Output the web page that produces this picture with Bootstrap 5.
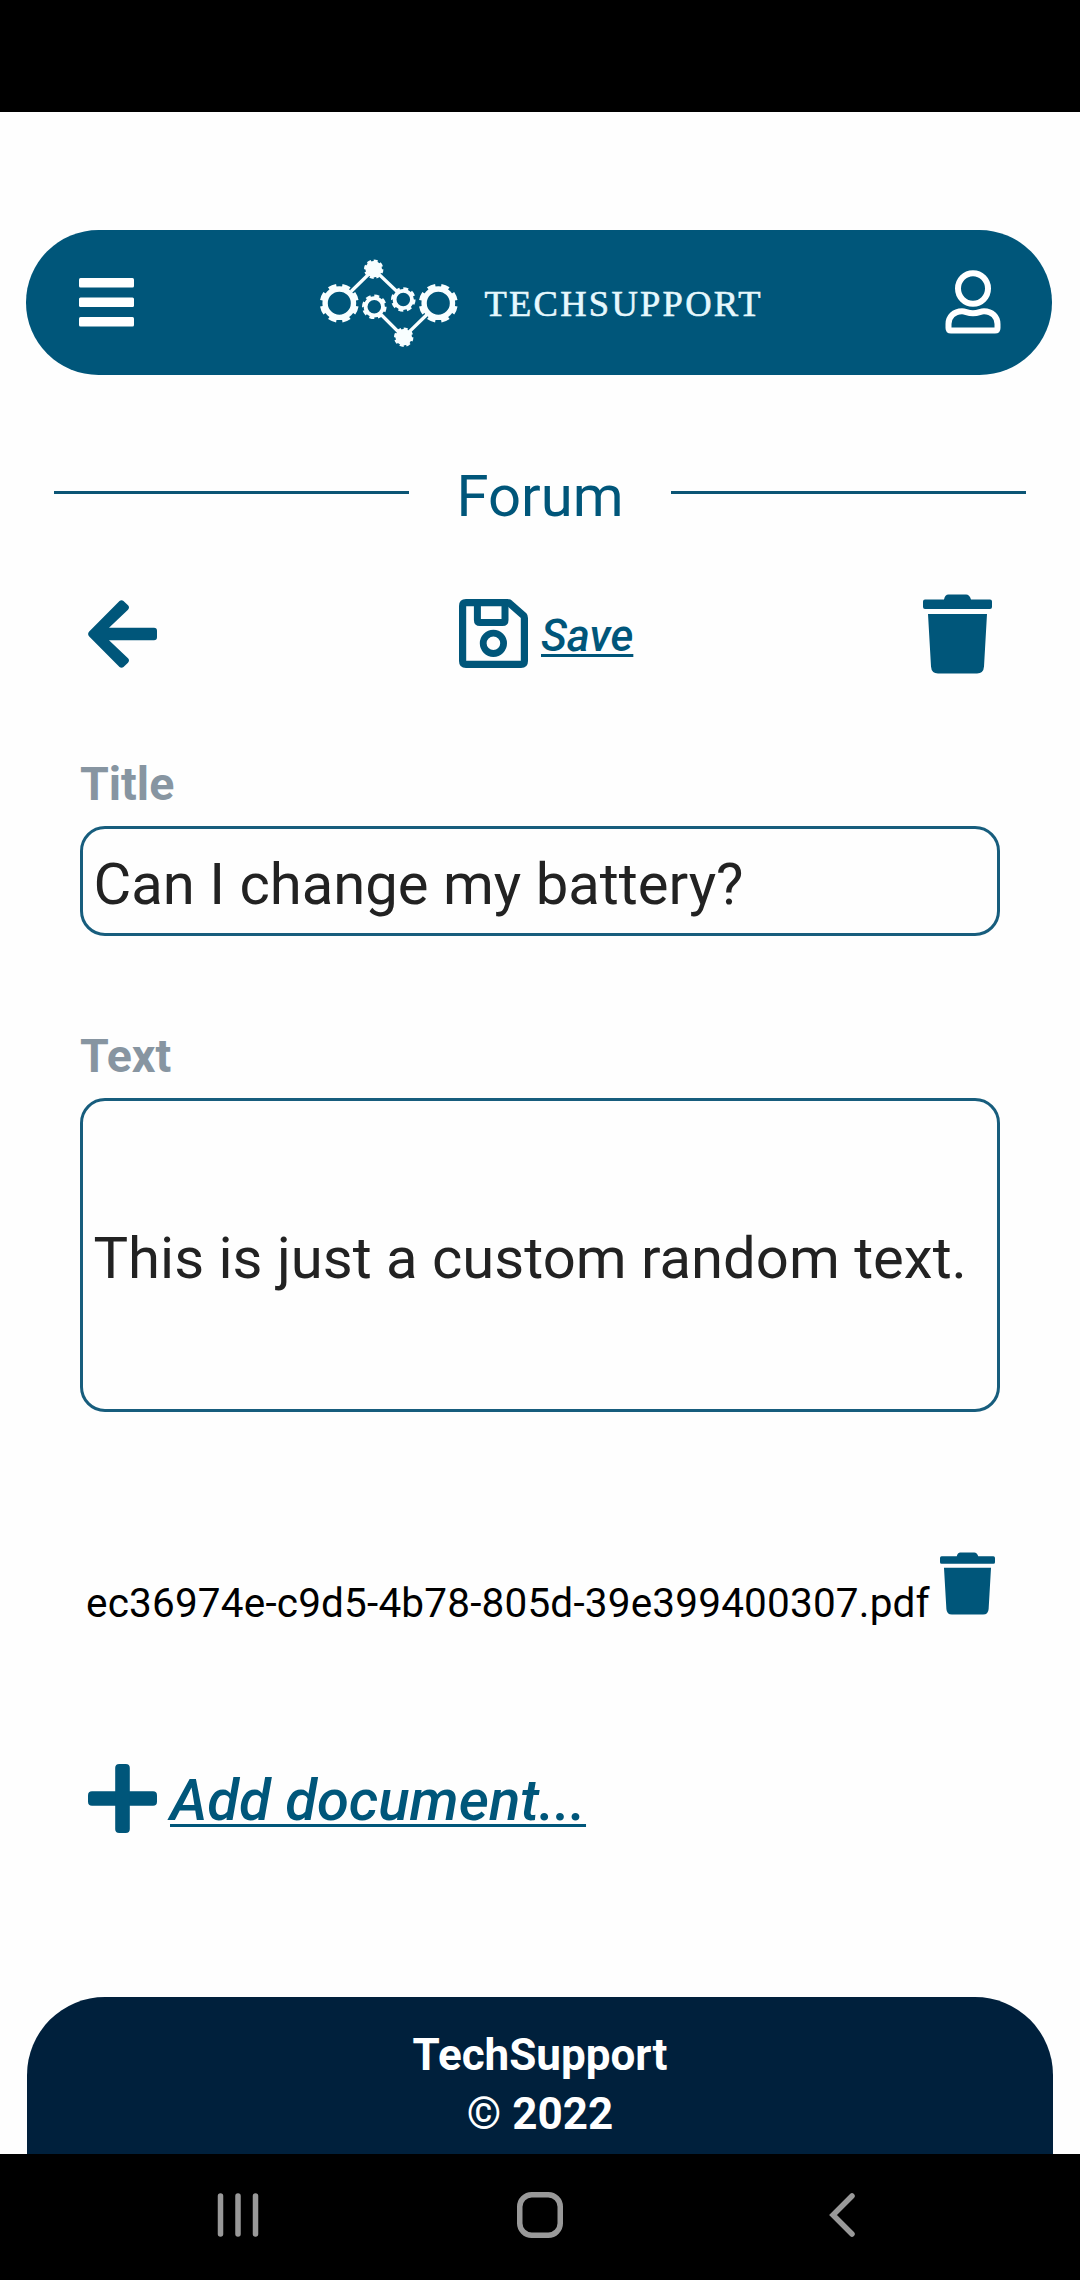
<!DOCTYPE html>
<html lang="en">
<head>
<meta charset="utf-8">
<meta name="viewport" content="width=device-width, initial-scale=1">
<title>TechSupport - Forum</title>
<link rel="stylesheet" href="https://cdn.jsdelivr.net/npm/bootstrap@5.3.0/dist/css/bootstrap.min.css">
<style>
  :root { --brand: #00567a; --navy: #00203c; }
  body { font-family: Roboto, sans-serif; background: #fefefe; color: #000; }
  svg { display: block; flex: none; }
  .screen { width: 1080px; height: 2280px; overflow: hidden; }
  .status-strip { height: 112px; }
  .top-bar { height: 145px; margin: 118px 28px 0 26px; padding: 0 51px 1px 53px; border-radius: 73px; background: var(--brand); }
  .brand-logo { margin-left: 1px; }
  .brand-name { font-family: "Liberation Serif", serif; font-size: 36.5px; fill: #e6f8fd; stroke: #e6f8fd; stroke-width: .6px; }
  .page-head { height: 80px; margin-top: 81px; padding: 0 54px; color: var(--brand); }
  .page-head h1 { width: 262px; font-size: 58px; line-height: 80px; font-weight: 400; }
  .rule { height: 3px; margin-top: -7px; background: #0b5575; }
  .tools { height: 80px; margin-top: 58px; padding: 0 88px; }
  .ink { color: var(--brand) !important; }
  .act { font-style: italic; font-weight: 500; text-decoration: underline; text-underline-offset: 4px; text-decoration-thickness: 2.5px; text-decoration-skip-ink: none; white-space: nowrap; }
  .act-save { gap: 13px; padding-left: 13px; margin-top: -1px; font-size: 44px; }
  .act-save .act { width: 93px; margin-top: 4px; text-underline-offset: 3px; }
  .fields { padding: 0 80px; }
  .fields .form-label { height: 56px; margin: 0 0 14px; font-size: 46.5px; line-height: 56px; font-weight: 700; color: #8795a1; display: block; }
  .fields .form-control { height: 110px; padding: 6px 10.5px 0; border: 3px solid #175d7d; border-radius: 25px; background: transparent; font-size: 58px; line-height: 1.2; color: #222; }
  .fields .form-control.tall { height: 314px; }
  .first-field { margin-top: 82px; }
  .next-field { margin-top: 92px; }
  .doc-row { height: 81px; margin-top: 140px; padding: 0 85px 0 86px; }
  .doc-name { margin-top: 21px; font-size: 40.5px; line-height: 60px; letter-spacing: .18px; }
  .add-row { height: 70px; margin-top: 130px; padding-left: 88px; gap: 13px; font-size: 58.1px; line-height: 70px; }
  .add-row .act { margin-top: 4px; }
  .foot { height: 157px; margin: 164px 27px 0; padding-top: 29px; border-radius: 78px 78px 0 0; background: var(--navy); font-size: 44px; line-height: 59px; }
  .sys-nav { height: 126px; padding: 0 87.5px 0 86.5px; }
  .sys-nav > div { margin-top: -4px; }
</style>
</head>
<body>
<div class="screen d-flex flex-column">
  <div class="status-strip bg-black"></div>

  <header class="top-bar d-flex align-items-center justify-content-between">
    <svg width="55" height="50" fill="#fff" role="img" aria-label="Menu"><rect y="1" width="55" height="9.500" rx="1.500"/><rect y="20.500" width="55" height="9.500" rx="1.500"/><rect y="40" width="55" height="9.500" rx="1.500"/></svg>
    <svg class="brand-logo" width="450" height="100" viewBox="315 252.500 450 100" role="img" aria-label="TechSupport">
      <defs>
        <g id="gearBig" fill="none" stroke="#f8feff"><circle r="14.200" stroke-width="5.400"/><circle r="17.400" stroke-width="4.200" pathLength="16" stroke-dasharray="1.150 .85" transform="rotate(9.500)"/></g>
        <g id="gearMid" fill="none" stroke="#f8feff"><circle r="8.700" stroke-width="3.800"/><circle r="10.900" stroke-width="2.800" pathLength="16" stroke-dasharray="1.150 .85"/></g>
        <g id="gearDot" fill="#f8feff" stroke="#f8feff"><circle r="8.300" stroke="none"/><circle r="8.500" fill="none" stroke-width="2.400" pathLength="16" stroke-dasharray="1.200 .8"/></g>
      </defs>
      <path d="M351 292 373.700 269.700 397 292M381 315 403.700 337.700 427 315" fill="none" stroke="#f8feff" stroke-width="3.300"/>
      <use href="#gearBig" x="339.300" y="303.700"/><use href="#gearBig" x="438.300" y="303.700"/>
      <use href="#gearMid" x="374.300" y="307.300"/><use href="#gearMid" x="403.300" y="300"/>
      <use href="#gearDot" x="373.700" y="269.700"/><use href="#gearDot" x="403.700" y="337.700"/>
      <text class="brand-name" x="484.500" y="316.700" textLength="276">TECHSUPPORT</text>
    </svg>
    <svg width="56" height="64" viewBox="0 0 56 64" fill="none" stroke="#fff" stroke-width="6" role="img" aria-label="Account"><ellipse cx="28" cy="18.500" rx="15" ry="15.300"/><path d="M17 41.200C21 41.200 22 43.300 28 43.300S35 41.200 39 41.200C47 41.200 52.500 47 52.500 54V58Q52.500 60.500 50 60.500H6Q3.500 60.500 3.500 58V54C3.500 47 9 41.200 17 41.200Z"/></svg>
  </header>

  <div class="page-head d-flex align-items-center">
    <div class="rule flex-fill"></div>
    <h1 class="text-center mb-0">Forum</h1>
    <div class="rule flex-fill"></div>
  </div>

  <div class="tools ink d-flex align-items-center justify-content-between">
    <svg width="69" height="68" viewBox="0 0 69 68" fill="currentColor" role="img" aria-label="Back"><path d="M35.500 1 40 5.300Q42 7.500 40 9.700L21 27.700H66Q69 27.700 69 30.700V37.300Q69 40.300 66 40.300H21L40 58.300Q42 60.500 40 62.700L35.500 67Q33.500 68.500 31.500 67L1.200 36.500Q-1 34 1.200 31.500L31.500 1Q33.500-.5 35.500 1Z"/></svg>
    <a href="#" class="act-save ink d-flex align-items-center text-decoration-none">
      <svg width="69" height="69" viewBox="0 0 69 69" fill="none" stroke="currentColor" role="img" aria-label="Disk"><path d="M7 3.600H48.500Q50 3.600 51 4.600L64.500 16.500Q65.400 17.500 65.400 19V62Q65.400 65.400 62 65.400H7Q3.600 65.400 3.600 62V7Q3.600 3.600 7 3.600Z" stroke-width="7.200"/><path d="M18.400 5V21Q18.400 23.500 21 23.500H43.500Q46 23.500 46 21V5" stroke-width="7"/><circle cx="34.400" cy="44.300" r="10.200" stroke-width="6.800"/></svg>
      <span class="act">Save</span>
    </a>
    <svg width="69" height="80" viewBox="0 0 69 80" fill="currentColor" role="img" aria-label="Delete"><path d="M2 5.500H21Q22 .5 25.500 .5H43Q46.500 .5 48 5.500H67Q69 5.500 69 7.500V13Q69 15 67 15H2Q0 15 0 13V7.500Q0 5.500 2 5.500ZM5 20H64L61 72.500Q60.500 79.500 54 79.500H15Q8.500 79.500 8 72.500Z"/></svg>
  </div>

  <form class="fields">
    <div class="first-field">
      <label class="form-label" for="title">Title</label>
      <input class="form-control" id="title" type="text" value="Can I change my battery?">
    </div>
    <div class="next-field">
      <label class="form-label" for="text">Text</label>
      <input class="form-control tall" id="text" type="text" value="This is just a custom random text.">
    </div>
  </form>

  <div class="doc-row d-flex align-items-start justify-content-between">
    <span class="doc-name">ec36974e-c9d5-4b78-805d-39e399400307.pdf</span>
    <svg class="ink" width="55" height="63" viewBox="0 0 69 80" preserveAspectRatio="none" fill="currentColor" role="img" aria-label="Remove document"><path d="M2 5.500H21Q22 .5 25.500 .5H43Q46.500 .5 48 5.500H67Q69 5.500 69 7.500V13Q69 15 67 15H2Q0 15 0 13V7.500Q0 5.500 2 5.500ZM5 20H64L61 72.500Q60.500 79.500 54 79.500H15Q8.500 79.500 8 72.500Z"/></svg>
  </div>

  <a href="#" class="add-row ink d-flex align-items-center text-decoration-none">
    <svg width="69" height="69" fill="currentColor" aria-hidden="true"><rect y="27.200" width="69" height="14.600" rx="4"/><rect x="27.200" width="14.600" height="69" rx="4"/></svg>
    <span class="act">Add document...</span>
  </a>

  <footer class="foot text-center text-white fw-bold">
    <div>TechSupport</div>
    <div>© 2022</div>
  </footer>

  <nav class="sys-nav bg-black d-flex align-items-center">
    <div class="flex-fill d-flex justify-content-center w-100"><svg width="42" height="46" stroke="#999" stroke-width="5.500" stroke-linecap="round"><path d="M3.500 4V42M21 4V42M38.500 4V42"/></svg></div>
    <div class="flex-fill d-flex justify-content-center w-100"><svg width="46" height="46" fill="none" stroke="#999" stroke-width="5.500"><rect x="2.750" y="2.750" width="40.500" height="40.500" rx="12"/></svg></div>
    <div class="flex-fill d-flex justify-content-center w-100"><svg width="28" height="46" fill="none" stroke="#999" stroke-width="5.500" stroke-linecap="round"><path d="M24 4 5 23 24 42"/></svg></div>
  </nav>
</div>
<script src="https://cdn.jsdelivr.net/npm/bootstrap@5.3.0/dist/js/bootstrap.bundle.min.js"></script>
</body>
</html>
